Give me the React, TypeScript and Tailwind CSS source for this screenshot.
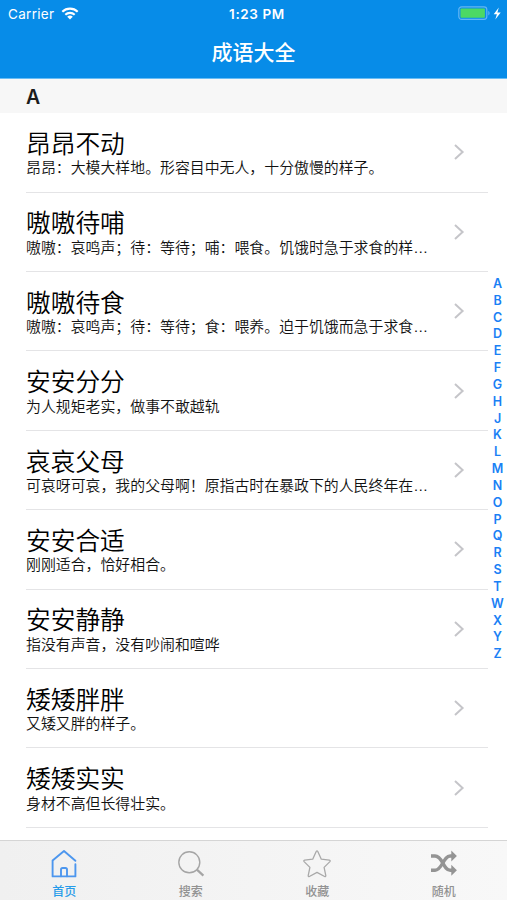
import React from 'react';

interface Idiom {
  /** Four character idiom */
  title: string;
  /** Short explanation, already shortened to one line */
  detail: string;
}

const idioms: Idiom[] = [
  { title: '昂昂不动', detail: '昂昂：大模大样地。形容目中无人，十分傲慢的样子。' },
  { title: '嗷嗷待哺', detail: '嗷嗷：哀鸣声；待：等待；哺：喂食。饥饿时急于求食的样…' },
  { title: '嗷嗷待食', detail: '嗷嗷：哀鸣声；待：等待；食：喂养。迫于饥饿而急于求食…' },
  { title: '安安分分', detail: '为人规矩老实，做事不敢越轨' },
  { title: '哀哀父母', detail: '可哀呀可哀，我的父母啊！原指古时在暴政下的人民终年在…' },
  { title: '安安合适', detail: '刚刚适合，恰好相合。' },
  { title: '安安静静', detail: '指没有声音，没有吵闹和喧哗' },
  { title: '矮矮胖胖', detail: '又矮又胖的样子。' },
  { title: '矮矮实实', detail: '身材不高但长得壮实。' },
];

const letters = 'ABCDEFGHJKLMNOPQRSTWXYZ'.split('');

const StatusBar: React.FC = () => (
  <div className="h-[27px] grid grid-cols-3 items-center pl-[8px] pr-[4px] text-[13.5px] leading-none font-['Inter','Liberation_Sans',sans-serif]">
    <div className="flex items-center gap-[7px] tracking-[0.3px]">
      <span className="pt-[2px]">Carrier</span>
      <svg width="18" height="13" viewBox="0 0 18 13" fill="none" stroke="currentColor" strokeWidth="2.1">
        <path d="M1.3 4.8a11 11 0 0 1 15.4 0" />
        <path d="M4.3 7.8a6.8 6.8 0 0 1 9.4 0" />
        <path d="M9 12.6 6.2 9.8a4 4 0 0 1 5.6 0z" fill="currentColor" stroke="none" />
      </svg>
    </div>
    <span className="text-center font-semibold pt-[2px] pl-[3px] tracking-[0.6px]">1:23 PM</span>
    <div className="flex items-center justify-end">
      <svg width="45" height="16" viewBox="0 0 45 16">
        <rect x="0.8" y="0.8" width="28" height="12.6" rx="2.8" fill="none" stroke="#63b6f4" strokeWidth="1.2" />
        <rect x="2.5" y="2.5" width="24.4" height="9.2" rx="0.8" fill="#4cd964" />
        <path d="M30.3 5v4.4c1.7-.6 1.7-3.8 0-4.4z" fill="#63b6f4" />
        <path d="M40.8 1.6 35.7 8.2h3.2l-1.6 5.2 5.4-7h-3.3z" fill="#fff" />
      </svg>
    </div>
  </div>
);

const IdiomRow: React.FC<Idiom> = ({ title, detail }) => (
  <li className="ml-[26px] h-[79.4px] border-b border-[#e4e4e6] flex items-center">
    <div className="w-[406px] flex-none pt-[4px] whitespace-nowrap">
      <h2 className="text-[24.7px] leading-[29.5px] font-[350] text-black">{title}</h2>
      <p className="text-[14.9px] leading-[19.5px] font-[350] text-[#111]">{detail}</p>
    </div>
    <svg className="ml-[21px]" width="13" height="18" viewBox="0 0 13 18" fill="none" stroke="#c5c5c9" strokeWidth="2">
      <path d="m2 2 7.6 7L2 16" />
    </svg>
  </li>
);

const HomeIcon = () => (
  <svg width="28" height="30" viewBox="0 0 28 30" fill="none" stroke="#4c96ee" strokeWidth="1.9" strokeLinecap="round" strokeLinejoin="round">
    <path d="M25.4 11.8 14 2 2.6 11.6V27.4H25.4V15.2" />
    <path d="M11 27.2V20.6q0-1.6 1.6-1.6h2.8q1.6 0 1.6 1.6v6.6" />
  </svg>
);

const SearchIcon = () => (
  <svg width="28" height="30" viewBox="0 0 28 30" fill="none" stroke="#a5a5a5">
    <circle cx="12.3" cy="13.3" r="10.5" strokeWidth="1.4" />
    <path d="m19.9 20.6 6.5 6" strokeWidth="2.2" />
  </svg>
);

const StarIcon = () => (
  <svg width="28" height="30" viewBox="0 0 28 30" fill="none" stroke="#a9a9a9" strokeWidth="1.3" strokeLinejoin="round">
    <path d="M13.2 2.5q.8-1.2 1.6 0l3.5 7.7 8.1.9q1.3.4.5 1.5l-5.8 5.8 1.7 8.3q0 1.3-1.2.8L14 23.4l-7.6 4.1q-1.2.5-1.2-.8l1.7-8.3-5.8-5.8q-.8-1.1.5-1.5l8.1-.9z" />
  </svg>
);

const ShuffleIcon = () => (
  <svg width="28" height="30" viewBox="0 0 28 30" fill="none" stroke="#949494" strokeWidth="3.4">
    <path d="M1 7h4.1c3.4 0 5.6 3.1 7.7 7s3.9 7.2 7.4 7.2h2" />
    <path d="M1 21.2h4.1c3.4 0 5.6-3.5 7.7-7.2S16.7 7 20.2 7h2" />
    <path d="m21.3 1.5 5.6 5.5-5.6 5.5zM21.3 15.7l5.6 5.5-5.6 5.5z" fill="#949494" stroke="none" />
  </svg>
);

const tabs = [
  { label: '首页', icon: <HomeIcon />, color: 'text-[#269be9]' },
  { label: '搜索', icon: <SearchIcon />, color: 'text-[#929292]' },
  { label: '收藏', icon: <StarIcon />, color: 'text-[#929292]' },
  { label: '随机', icon: <ShuffleIcon />, color: 'text-[#929292]' },
];

export default function App() {
  return (
    <div className="w-[507px] h-[900px] overflow-hidden flex flex-col bg-white font-['Liberation_Sans','Noto_Sans_CJK_SC',sans-serif]">
      <header className="h-[79px] flex-none bg-[#078ce8] text-white border-b border-[#69bdf5]">
        <StatusBar />
        <h1 className="text-center text-[21px] leading-[52px] font-medium">成语大全</h1>
      </header>

      <div className="h-[34.3px] flex-none bg-[#f7f7f7] pl-[26px] pt-[1px] text-[19.5px] leading-[35px] font-semibold text-[#1c1c1c] font-['Inter',sans-serif]">
        A
      </div>

      <main className="flex-1 min-h-0 flex overflow-hidden">
        <ul className="w-[488px] flex-none">
          {idioms.map((idiom) => (
            <IdiomRow key={idiom.title} {...idiom} />
          ))}
        </ul>
        <nav className="flex-1 pt-[162.7px] text-center text-[12.5px] font-semibold text-[#1a80f5] font-['Inter',sans-serif]">
          {letters.map((letter) => (
            <div key={letter} className="h-[16.84px] leading-[16.84px]">
              {letter}
            </div>
          ))}
        </nav>
      </main>

      <footer className="h-[60px] flex-none border-t border-[#d5d5d5] bg-linear-to-r from-[#f0f0f0] to-[#f8f8f8] grid grid-cols-4 pl-[1px]">
        {tabs.map((tab) => (
          <div key={tab.label} className={`flex flex-col items-center pt-[8px] ${tab.color}`}>
            {tab.icon}
            <span className="text-[12px] leading-[18px] mt-[4px] font-medium">{tab.label}</span>
          </div>
        ))}
      </footer>
    </div>
  );
}
